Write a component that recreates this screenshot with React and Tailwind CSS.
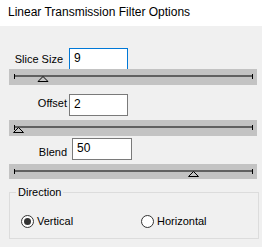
import React from "react";

function Slider({ thumb, h = 16 }) {
  return (
    <div className="w-[248px] bg-[#c3c3c3]" style={{ height: h }}>
      <svg width="248" height={h} className="block">
        <line x1="5" y1="7" x2="244" y2="7" stroke="#000" strokeWidth="1.2" />
        <line x1="5.5" y1="5" x2="5.5" y2="10" stroke="#000" strokeWidth="1" />
        <line x1="243.5" y1="5" x2="243.5" y2="10" stroke="#000" strokeWidth="1" />
        <polygon
          points={`${thumb},7.5 ${thumb - 5},12.5 ${thumb + 5},12.5`}
          fill="#c3c3c3"
          stroke="#000"
          strokeWidth="1"
        />
      </svg>
    </div>
  );
}

function Field({ label, value, labelW, gap, w = 59, textClass = "", border = "border-[#7a7a7a]" }) {
  return (
    <div className="flex items-center h-[22px]">
      <div className={`flex justify-end ${labelW} ${textClass}`}>{label}</div>
      <div
        className={`${gap} ${border} h-[22px] border bg-white pl-[4px] pt-[2px] leading-[15px] text-[12px]`}
        style={{ width: w }}
      >
        {value}
      </div>
    </div>
  );
}

function Radio({ checked, label }) {
  return (
    <div className="flex items-center gap-[3px]">
      <div className="w-[13px] h-[13px] rounded-full border border-[#333] bg-white flex items-center justify-center">
        {checked && <div className="w-[7px] h-[7px] rounded-full bg-[#333]" />}
      </div>
      <span>{label}</span>
    </div>
  );
}

export default function App() {
  return (
    <div
      className="w-[262px] h-[247px] bg-[#f0f0f0] text-[11px] text-black overflow-hidden"
      style={{ fontFamily: '"Liberation Sans", Arial, sans-serif' }}
    >
      <div className="h-[26px] bg-white pl-[8px] flex items-center text-[12px] pb-[2px]">
        Linear Transmission Filter Options
      </div>

      <div className="flex flex-col">
        <div className="mt-[22px]">
          <Field label="Slice Size" value="9" labelW="w-[63px]" gap="ml-[6px]" border="border-[#0078d7]" />
        </div>
        <div className="-mt-[1px] pl-[9px]">
          <Slider thumb={34} />
        </div>

        <div className="mt-[9px]">
          <Field label="Offset" value="2" labelW="w-[67px]" gap="ml-[2px]" textClass="-mt-[3px]" />
        </div>
        <div className="mt-[4px] pl-[9px]">
          <Slider thumb={9.5} />
        </div>

        <div className="mt-[2px]">
          <Field label="Blend" value="50" labelW="w-[67px]" gap="ml-[5px]" w={60} textClass="mt-[6px]" />
        </div>
        <div className="mt-[4px] pl-[9px]">
          <Slider thumb={184.5} h={15} />
        </div>

        <div className="mt-[13px] ml-[9px] w-[250px] h-[47px] border border-[#dcdcdc] relative">
          <span className="absolute -top-[8px] left-[6px] bg-[#f0f0f0] px-[2px] leading-[14px]">
            Direction
          </span>
          <div className="flex items-center pt-[20px] pl-[11px]">
            <div className="w-[120px]">
              <Radio checked label="Vertical" />
            </div>
            <Radio label="Horizontal" />
          </div>
        </div>
      </div>
    </div>
  );
}
